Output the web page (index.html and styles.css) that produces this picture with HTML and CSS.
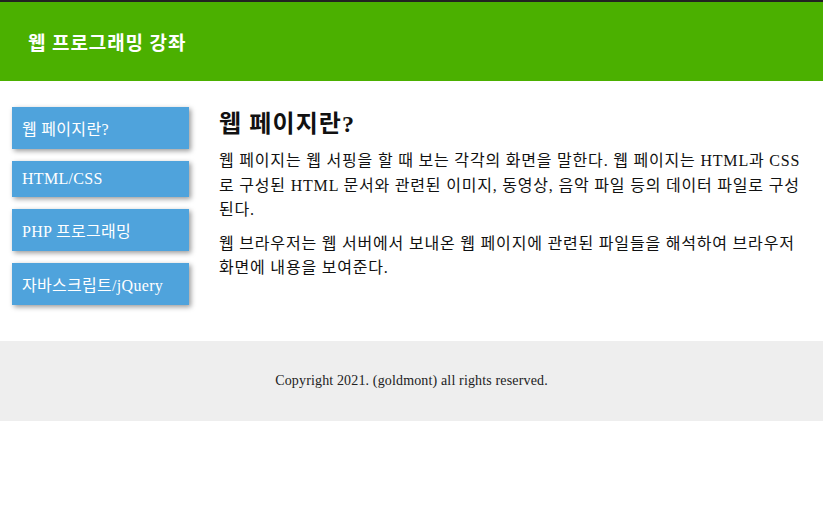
FILE: index.html
```html
<!DOCTYPE html>
<html lang="ko">
<head>
<meta charset="utf-8">
<title>웹 프로그래밍 강좌</title>
<link rel="stylesheet" href="styles.css">
</head>
<body>
<header class="site-header">
  <h1 class="site-title">웹 프로그래밍 강좌</h1>
</header>
<div class="main">
  <nav class="side-nav">
    <a class="nav-item" href="#">웹 페이지란?</a>
    <a class="nav-item" href="#">HTML/CSS</a>
    <a class="nav-item" href="#">PHP 프로그래밍</a>
    <a class="nav-item" href="#">자바스크립트/jQuery</a>
  </nav>
  <section class="content">
    <h2 class="content-title">웹 페이지란?</h2>
    <p class="content-text">웹 페이지는 웹 서핑을 할 때 보는 각각의 화면을 말한다. 웹 페이지는 HTML과 CSS로 구성된 HTML 문서와 관련된 이미지, 동영상, 음악 파일 등의 데이터 파일로 구성된다.</p>
    <p class="content-text">웹 브라우저는 웹 서버에서 보내온 웹 페이지에 관련된 파일들을 해석하여 브라우저 화면에 내용을 보여준다.</p>
  </section>
</div>
<footer class="site-footer">
  <p class="copyright">Copyright 2021. (goldmont) all rights reserved.</p>
</footer>
</body>
</html>
```
FILE: styles.css
```css
html, body {
  margin: 0;
  padding: 0;
  background: #fff;
}
body {
  font-family: "Liberation Serif", "Noto Sans CJK KR", serif;
  color: #111;
}
.site-header {
  border-top: 2px solid #222;
  background: #4bb000;
  height: 79px;
  display: flex;
  align-items: center;
  padding-left: 28px;
}
.site-title {
  margin: 0;
  font-size: 19px;
  font-weight: bold;
  letter-spacing: 0.9px;
  color: #fff;
}
.main {
  display: flex;
  gap: 30px;
  padding: 26px 15px 36px 12px;
}
.side-nav {
  flex: 0 0 177px;
  display: flex;
  flex-direction: column;
  gap: 12px;
}
.nav-item {
  display: block;
  background: #4fa3dc;
  color: #fff;
  text-decoration: none;
  font-size: 16px;
  letter-spacing: 0.3px;
  padding: 9px 10px;
  box-shadow: 2px 2px 5px rgba(0, 0, 0, 0.4);
}
.content {
  flex: 1;
}
.content-title {
  margin: 0 0 7px;
  font-size: 24px;
  font-weight: bold;
  letter-spacing: 1.1px;
  line-height: 35px;
}
.content-text {
  margin: 0 0 9px;
  font-size: 16px;
  letter-spacing: 0.8px;
  line-height: 24.5px;
}
.site-footer {
  background: #eeeeee;
  height: 80px;
  display: flex;
  align-items: center;
  justify-content: center;
}
.copyright {
  margin: 0;
  font-size: 14px;
  letter-spacing: 0.15px;
  color: #222;
}
```
